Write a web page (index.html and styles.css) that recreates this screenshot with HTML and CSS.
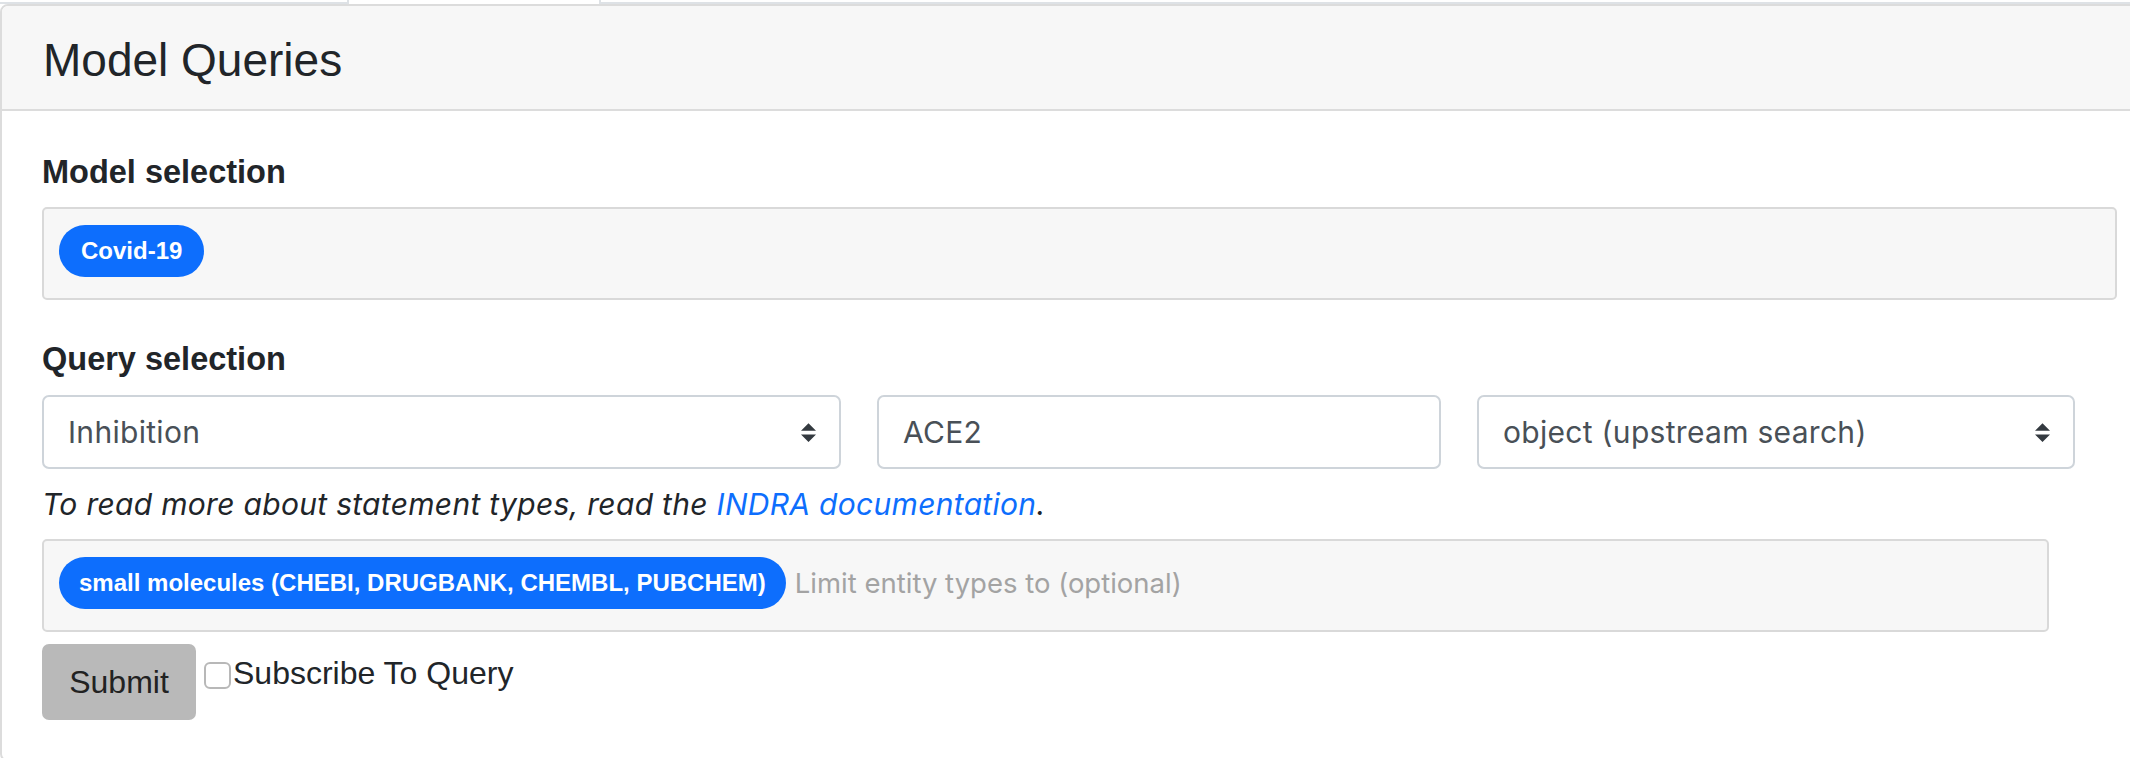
FILE: index.html
```html
<!DOCTYPE html>
<html lang="en">
<head>
<meta charset="utf-8">
<title>Model Queries</title>
<link rel="stylesheet" href="styles.css">
</head>
<body>
<div class="nav">
  <div class="nav-tab"></div>
</div>
<div class="card">
  <div class="card-header">
    <h3 class="card-title">Model Queries</h3>
  </div>
  <div class="card-body">
    <h5 class="section-label">Model selection</h5>
    <div class="tag-box model-box">
      <span class="pill pill-model">Covid-19</span>
    </div>

    <h5 class="section-label label-query">Query selection</h5>
    <div class="query-row">
      <div class="field select-field">
        <span class="field-text">Inhibition</span>
        <svg class="caret" viewBox="0 0 4 5" width="15" height="19"><path d="M2 0L0 2h4zm0 5L0 3h4z" fill="#343a40"/></svg>
      </div>
      <div class="field">
        <span class="field-text">ACE2</span>
      </div>
      <div class="field select-field">
        <span class="field-text">object (upstream search)</span>
        <svg class="caret" viewBox="0 0 4 5" width="15" height="19"><path d="M2 0L0 2h4zm0 5L0 3h4z" fill="#343a40"/></svg>
      </div>
    </div>
    <p class="help-text">To read more about statement types, read the <a class="doc-link" href="#">INDRA documentation</a>.</p>

    <div class="tag-box entity-box">
      <span class="pill">small molecules (CHEBI, DRUGBANK, CHEMBL, PUBCHEM)</span>
      <span class="placeholder">Limit entity types to (optional)</span>
    </div>

    <div class="actions">
      <button class="btn-submit" type="button">Submit</button>
      <input class="check" type="checkbox" id="subscribe">
      <label class="check-label" for="subscribe">Subscribe To Query</label>
    </div>
  </div>
</div>
</body>
</html>
```

FILE: styles.css
```css
html, body {
  margin: 0;
  padding: 0;
  overflow: hidden;
  background: #ffffff;
  font-family: "Liberation Sans", Arial, sans-serif;
  color: #212529;
}

.nav {
  height: 2px;
  border-bottom: 2px solid #dee2e6;
  display: flex;
}

.nav-tab {
  margin-left: 347px;
  width: 250px;
  height: 4px;
  background: #ffffff;
  border-left: 2px solid #dee2e6;
  border-right: 2px solid #dee2e6;
}

.card {
  width: 2150px;
  border: 2px solid #dcdcdc;
  border-radius: 8px;
  overflow: hidden;
}

.card-header {
  background: #f7f7f7;
  border-bottom: 2px solid #dcdcdc;
  padding: 27px 0 21px 41px;
}

.card-title {
  margin: 0;
  font-size: 46px;
  line-height: 55px;
  font-weight: 400;
  color: #212529;
}

.card-body {
  padding: 42px 0 40px 40px;
}

.section-label {
  margin: 0 0 16px;
  font-size: 32.5px;
  line-height: 38px;
  font-weight: 700;
  color: #212529;
}

.label-query {
  margin-top: 40px;
  margin-bottom: 17px;
}

.tag-box {
  box-sizing: border-box;
  height: 93px;
  background: #f7f7f7;
  border: 2px solid #d9d9d9;
  border-radius: 5px;
  padding: 16px 15px 21px;
  display: flex;
  align-items: center;
}

.model-box {
  width: 2075px;
}

.entity-box {
  width: 2007px;
}

.pill {
  display: inline-flex;
  align-items: center;
  height: 52px;
  padding: 0 20px;
  border-radius: 26px;
  background: #0d6efd;
  color: #ffffff;
  font-family: "Liberation Sans", Arial, sans-serif;
  font-weight: 700;
  font-size: 24px;
  white-space: nowrap;
}

.pill-model {
  padding: 0 22px;
}

.placeholder {
  margin-left: 9px;
  font-family: Inter, "Liberation Sans", sans-serif;
  font-size: 27.5px;
  color: #a3a3a3;
  white-space: nowrap;
}

.query-row {
  display: grid;
  grid-template-columns: 799px 564px 598px;
  column-gap: 36px;
}

.field {
  box-sizing: border-box;
  height: 74px;
  border: 2px solid #ced4da;
  border-radius: 7px;
  background: #ffffff;
  padding: 0 23px 0 24px;
  display: flex;
  align-items: center;
  justify-content: space-between;
}

.field-text {
  font-family: Inter, "Liberation Sans", sans-serif;
  font-size: 30px;
  letter-spacing: 0.3px;
  color: #495057;
  white-space: nowrap;
}

.caret {
  display: block;
  flex: none;
}

.help-text {
  margin: 15px 0 15px;
  font-family: Inter, "Liberation Sans", sans-serif;
  font-style: italic;
  font-size: 30px;
  letter-spacing: 0.3px;
  line-height: 40px;
  color: #212529;
}

.doc-link {
  color: #0d6efd;
  text-decoration: none;
}

.actions {
  margin-top: 12px;
  display: flex;
  align-items: flex-start;
}

.btn-submit {
  width: 154px;
  height: 76px;
  border: none;
  border-radius: 7px;
  background: #b9b9b9;
  color: #222222;
  font-family: "Liberation Sans", Arial, sans-serif;
  font-size: 32px;
  padding: 0;
}

.check {
  -webkit-appearance: none;
  appearance: none;
  box-sizing: border-box;
  width: 27px;
  height: 27px;
  margin: 18px 2px 0 8px;
  border: 2px solid #b8b8b8;
  border-radius: 6px;
  background: #ffffff;
}

.check-label {
  margin-top: 11px;
  font-family: "Liberation Sans", Arial, sans-serif;
  font-size: 32px;
  line-height: 37px;
  color: #212529;
}
```
